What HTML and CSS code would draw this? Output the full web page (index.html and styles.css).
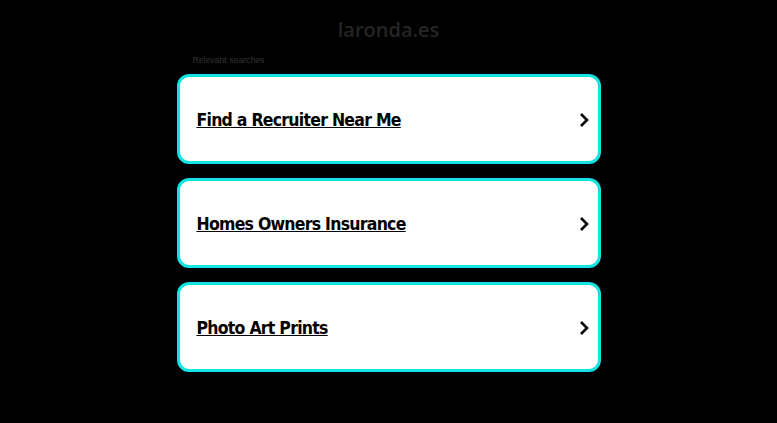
FILE: index.html
```html
<!DOCTYPE html>
<html lang="en">

<head>
  <meta charset="UTF-8" />
  <meta name="viewport" content="width=device-width, initial-scale=1.0" />
  <title>laronda.es</title>
  <link rel="stylesheet" href="styles.css">
</head>

<body>
  <header>
    <h1>laronda.es</h1>
  </header>

  <main class="searches">
    <p class="searches-title">Relevant searches</p>
    <ul>
      <li>
        <a href="#">
          <span>Find a Recruiter Near Me</span>
          <svg viewBox="0 0 10 16" width="10" height="16"><path d="M2 2l6 6-6 6" fill="none" stroke="#000" stroke-width="2.6" /></svg>
        </a>
      </li>
      <li>
        <a href="#">
          <span>Homes Owners Insurance</span>
          <svg viewBox="0 0 10 16" width="10" height="16"><path d="M2 2l6 6-6 6" fill="none" stroke="#000" stroke-width="2.6" /></svg>
        </a>
      </li>
      <li>
        <a href="#">
          <span>Photo Art Prints</span>
          <svg viewBox="0 0 10 16" width="10" height="16"><path d="M2 2l6 6-6 6" fill="none" stroke="#000" stroke-width="2.6" /></svg>
        </a>
      </li>
    </ul>
  </main>
</body>

</html>
```

FILE: styles.css
```css
body {
  margin: 0;
  background: #000;
  font-family: 'Open Sans', sans-serif;
}

header {
  text-align: center;
  padding-top: 17px;
}

header h1 {
  margin: 0;
  font-size: 20px;
  line-height: 26px;
  font-weight: 600;
  color: #252525;
}

.searches {
  width: 424px;
  margin: 0 auto;
}

.searches-title {
  margin: 10px 0 7px 16px;
  font-family: 'Liberation Sans', sans-serif;
  font-size: 8.7px;
  line-height: 14px;
  color: #333;
}

.searches ul {
  list-style: none;
  margin: 0;
  padding: 0;
  display: flex;
  flex-direction: column;
  gap: 14px;
}

.searches li a {
  display: flex;
  align-items: center;
  justify-content: space-between;
  height: 90px;
  box-sizing: border-box;
  padding: 2px 9px 0 17px;
  background: #fff;
  border: 3px solid #12e3e3;
  border-radius: 12px;
  color: #000;
  text-decoration: none;
}

.searches li span {
  font-family: 'DejaVu Sans Condensed', 'DejaVu Sans', sans-serif;
  font-weight: bold;
  font-size: 17.5px;
  letter-spacing: -0.75px;
  text-decoration: underline;
}
```
